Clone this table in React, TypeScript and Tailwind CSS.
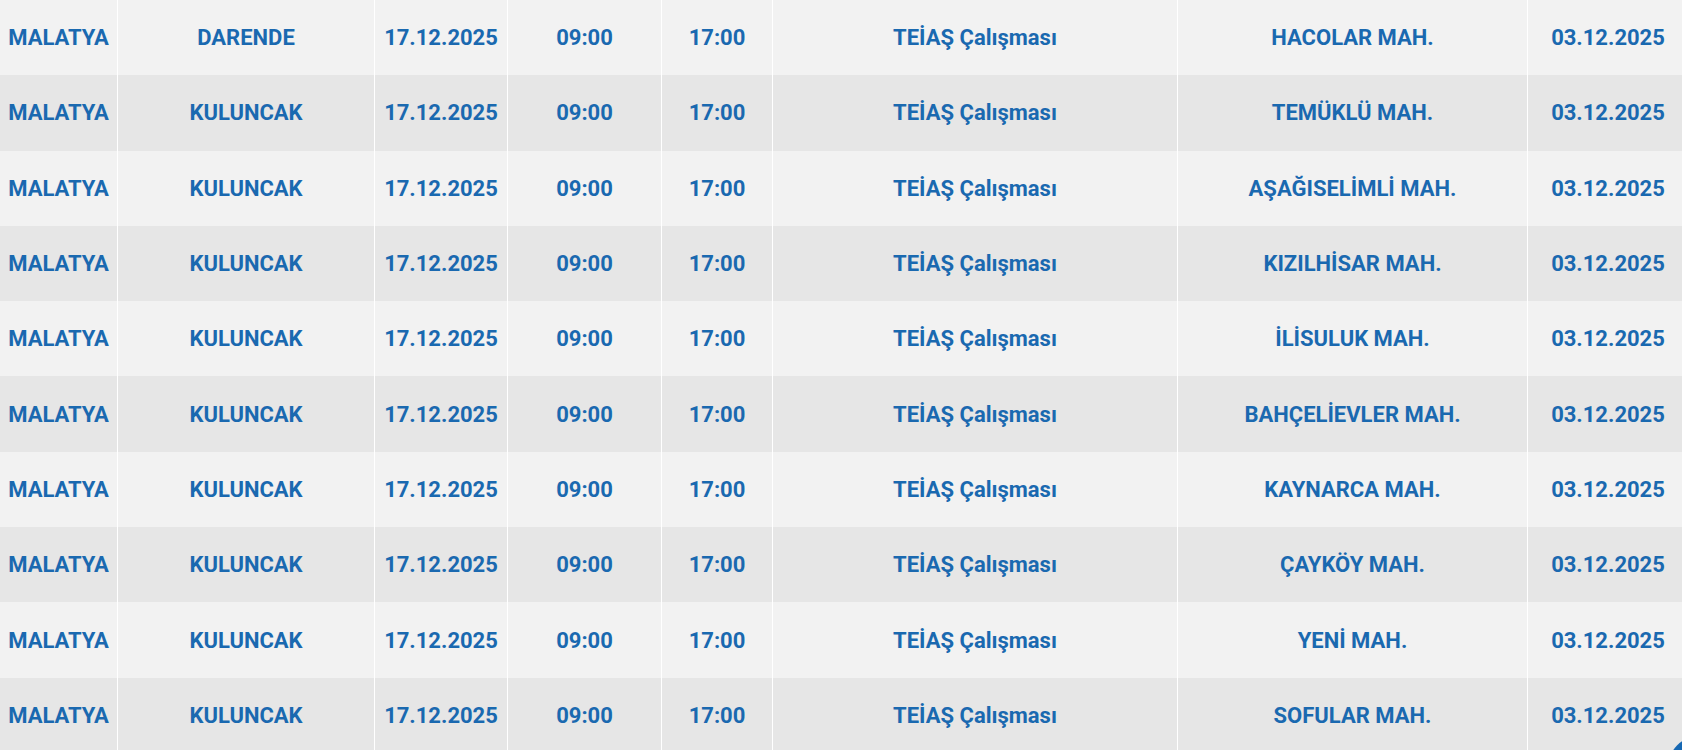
const cols = [
  "w-[118px]",
  "w-[257px]",
  "w-[133px]",
  "w-[154px]",
  "w-[111px]",
  "w-[405px]",
  "w-[350px]",
  "flex-1 pl-[6px]",
];

const districts = [
  ["DARENDE", "HACOLAR MAH."],
  ["KULUNCAK", "TEMÜKLÜ MAH."],
  ["KULUNCAK", "AŞAĞISELİMLİ MAH."],
  ["KULUNCAK", "KIZILHİSAR MAH."],
  ["KULUNCAK", "İLİSULUK MAH."],
  ["KULUNCAK", "BAHÇELİEVLER MAH."],
  ["KULUNCAK", "KAYNARCA MAH."],
  ["KULUNCAK", "ÇAYKÖY MAH."],
  ["KULUNCAK", "YENİ MAH."],
  ["KULUNCAK", "SOFULAR MAH."],
];

export default function App() {
  return (
    <div className="relative h-[750px] w-full overflow-hidden bg-[#f2f2f2] font-['Roboto',sans-serif]">
      {districts.map(([ilce, mahalle], i) => {
        const cells = [
          "MALATYA",
          ilce,
          "17.12.2025",
          "09:00",
          "17:00",
          "TEİAŞ Çalışması",
          mahalle,
          "03.12.2025",
        ];
        return (
          <div
            key={i}
            className={`flex h-[75.3px] ${i % 2 === 0 ? "bg-[#f2f2f2]" : "bg-[#e6e6e6]"}`}
          >
            {cells.map((text, j) => (
              <div
                key={j}
                className={`${cols[j]} flex items-center justify-center ${
                  j < cells.length - 1 ? "border-r border-white" : ""
                } text-[22px] font-bold text-[#1a69b0]`}
              >
                {text}
              </div>
            ))}
          </div>
        );
      })}
      {/* floating button, mostly off screen */}
      <div className="absolute left-[1669px] top-[737px] h-[56px] w-[56px] rounded-full bg-[#1668b3]" />
    </div>
  );
}
